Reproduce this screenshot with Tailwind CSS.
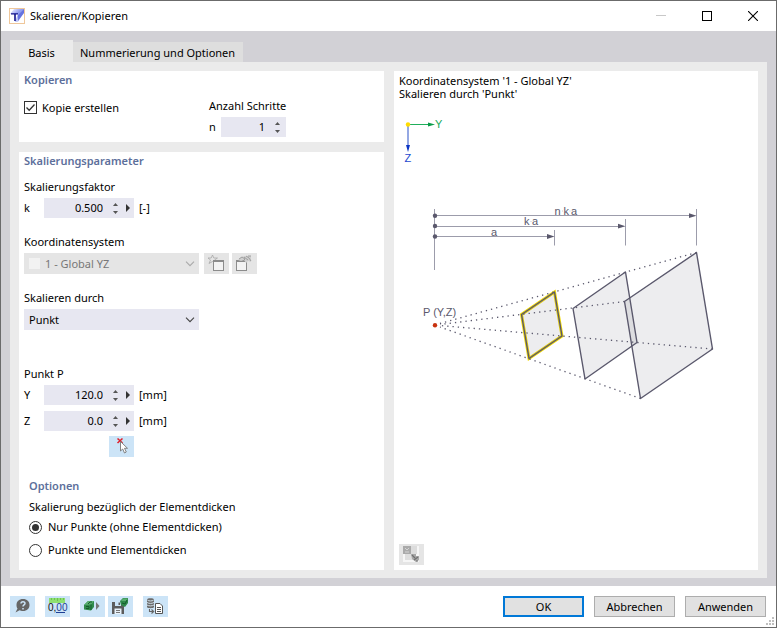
<!DOCTYPE html>
<html lang="de">
<head>
  <meta charset="UTF-8" />
  <meta name="viewport" content="width=device-width, initial-scale=1.0"/>
  <title>Skalieren/Kopieren</title>
  <script src="https://cdn.jsdelivr.net/npm/@tailwindcss/browser@4"></script>
</head>
<body class="bg-white text-black font-['Noto_Sans','Open_Sans',sans-serif] text-[11px] leading-4">
  <svg class="hidden">
    <symbol id="up" viewBox="0 0 5 3"><path d="M0 3L2.5 0L5 3Z" fill="#555"/></symbol>
    <symbol id="down" viewBox="0 0 5 3"><path d="M0 0L2.5 3L5 0Z" fill="#555"/></symbol>
    <symbol id="right" viewBox="0 0 4 8"><path d="M0 0L4 4L0 8Z" fill="#333"/></symbol>
    <symbol id="chevron" viewBox="0 0 10 6"><path d="M1 .7L5 4.7L9 .7" fill="none" stroke="currentColor" stroke-width="1.1"/></symbol>
  </svg>

  <div class="relative min-h-screen flex flex-col border border-[#6b6b6b]">
    <!-- Title bar -->
    <header class="h-[30px] flex items-center pl-2">
      <svg class="size-4" viewBox="0 0 16 16">
        <defs><linearGradient id="logo" x1="0" y1="0" x2="1" y2="1"><stop offset="0" stop-color="#fff"/><stop offset=".45" stop-color="#8d9af0"/><stop offset="1" stop-color="#fff"/></linearGradient></defs>
        <rect x=".5" y=".5" width="15" height="15" fill="#fff" stroke="#efc79a"/>
        <path d="M5 1H15V4L9 14H6L9 6H1Z" fill="url(#logo)"/>
        <path d="M10 6L15 1V5L9 13V7Z" fill="#6673e0"/>
        <path d="M2 5.2H9V6.6H6.8V13H5.2V6.6H2Z" fill="#12128c"/>
      </svg>
      <h1 class="ml-[5px] flex-1">Skalieren/Kopieren</h1>
      <button class="w-[46px] h-[30px] flex items-center justify-center" aria-label="Minimieren" disabled>
        <svg class="size-[10px]" viewBox="0 0 10 10"><path d="M0 4.5H10" stroke="#c8c8c8"/></svg>
      </button>
      <button class="w-[46px] h-[30px] flex items-center justify-center" aria-label="Maximieren">
        <svg class="size-[10px]" viewBox="0 0 10 10"><rect x=".5" y=".5" width="9" height="9" fill="none" stroke="#000"/></svg>
      </button>
      <button class="w-[46px] h-[30px] flex items-center justify-center" aria-label="Schließen">
        <svg class="size-[10px]" viewBox="0 0 10 10"><path d="M0 0L10 10M10 0L0 10" stroke="#000" stroke-width="1.1"/></svg>
      </button>
    </header>

    <main class="flex-1 flex flex-col bg-[#d2d1d6] px-[9px] pt-[9px] pb-2">
      <!-- Tabs -->
      <div class="flex items-end" role="tablist">
        <button role="tab" aria-selected="true" class="w-[63px] h-[22px] bg-[#ebebeb] pt-1">Basis</button>
        <button role="tab" aria-selected="false" class="h-5 bg-[#dedede] pl-[7px] pr-2 pt-[2px]">Nummerierung und Optionen</button>
      </div>

      <div class="flex-1 bg-[#ebebeb] px-[9px] pt-[9px] pb-2 grid grid-cols-[365px_minmax(0,1fr)] gap-[10px]">
        <div class="flex flex-col gap-[10px]">
          <!-- Kopieren -->
          <section class="bg-white px-[5px] pt-[1px] pb-[5px]">
            <h2 class="font-semibold text-[#5d6f9b]">Kopieren</h2>
            <div class="mt-[10px] grid grid-cols-[185px_1fr]">
              <label class="flex items-center gap-[5px] h-[19px]">
                <input type="checkbox" checked class="peer appearance-none size-[13px] border border-[#333] bg-white"/>
                <svg class="absolute size-[13px] invisible peer-checked:visible pointer-events-none" viewBox="0 0 13 13"><path d="M2.5 6.5L5.2 9.3L10.5 3.5" fill="none" stroke="#333" stroke-width="1.3"/></svg>
                Kopie erstellen
              </label>
              <div>
                <label for="n">Anzahl Schritte</label>
                <div class="mt-[3px] flex items-center">
                  <label for="n" class="w-3">n</label>
                  <div class="w-[65px] h-5 bg-[#e7e7f1] flex items-center">
                    <input id="n" value="1" class="w-11 text-right outline-none"/>
                    <span class="ml-[10px] flex flex-col gap-[5px]">
                      <button aria-label="Mehr"><svg class="w-[5px] h-[3px]"><use href="#up"/></svg></button>
                      <button aria-label="Weniger"><svg class="w-[5px] h-[3px]"><use href="#down"/></svg></button>
                    </span>
                  </div>
                </div>
              </div>
            </div>
          </section>

          <!-- Skalierungsparameter -->
          <section class="flex-1 bg-white px-[5px] pt-[1px] pb-[10px]">
            <h2 class="font-semibold text-[#5d6f9b]">Skalierungsparameter</h2>
            <label for="k" class="block mt-[10px]">Skalierungsfaktor</label>
            <div class="mt-[3px] flex items-center">
              <label for="k" class="w-5">k</label>
              <div class="w-[90px] h-5 bg-[#e7e7f1] flex items-center">
                <input id="k" value="0.500" class="w-[59px] text-right outline-none"/>
                <span class="ml-[10px] flex flex-col gap-[5px]">
                  <button aria-label="Mehr"><svg class="w-[5px] h-[3px]"><use href="#up"/></svg></button>
                  <button aria-label="Weniger"><svg class="w-[5px] h-[3px]"><use href="#down"/></svg></button>
                </span>
                <button class="ml-2" aria-label="Auswahl"><svg class="w-1 h-2"><use href="#right"/></svg></button>
              </div>
              <span class="ml-[5px]">[-]</span>
            </div>

            <label for="system" class="block mt-4">Koordinatensystem</label>
            <div class="mt-[3px] flex">
              <div class="relative w-[175px] h-[21px]">
                <select id="system" disabled class="appearance-none size-full bg-[#e5e5e5] pl-[21px] text-[#777] opacity-100">
                  <option>1 - Global YZ</option>
                </select>
                <span class="absolute left-[5px] top-[5px] size-[11px] bg-[#f2f2f2]"></span>
                <svg class="absolute right-[4px] top-2 w-[10px] h-[6px] text-[#aaa] pointer-events-none"><use href="#chevron"/></svg>
              </div>
              <button class="ml-[5px] w-[25px] h-[21px] bg-[#e5e5e5]" aria-label="Neues Koordinatensystem" disabled>
                <svg class="w-[25px] h-[21px]" viewBox="0 0 25 21" fill="none">
                  <path d="M8.5 2L9.8 5H13.500L10.500 7L12 10.500L8.500 8.500L5 10.500L6.500 7L4 5H7.200Z" stroke="#a8a8a8" stroke-width=".8"/>
                  <rect x="9.500" y="7.500" width="10" height="10" fill="#f3f3f3" stroke="#8c8c8c"/>
                  <path d="M9 8H20" stroke="#8c8c8c" stroke-width="2"/>
                </svg>
              </button>
              <button class="ml-[3px] w-[25px] h-[21px] bg-[#e5e5e5]" aria-label="Koordinatensystem bearbeiten" disabled>
                <svg class="w-[25px] h-[21px]" viewBox="0 0 25 21" fill="none">
                  <rect x="4.500" y="7.500" width="10" height="10" fill="#f3f3f3" stroke="#8c8c8c"/>
                  <path d="M4 8H15" stroke="#8c8c8c" stroke-width="2"/>
                  <path d="M6 7L9 4L14 3L19 3V9L16 8L14 10L12 7L9 8Z" fill="#cfcfcf"/>
                  <path d="M7 6L10 4L13 6L11 8M14 3L17 5L19 8M12 4L16 7M16 3H19" stroke="#999" stroke-width=".9"/>
                </svg>
              </button>
            </div>

            <label for="mode" class="block mt-4">Skalieren durch</label>
            <div class="mt-[3px] relative w-[175px] h-[21px]">
              <select id="mode" class="appearance-none size-full bg-[#e7e7f1] pl-[5px]">
                <option>Punkt</option>
              </select>
              <svg class="absolute right-[4px] top-2 w-[10px] h-[6px] text-[#444] pointer-events-none"><use href="#chevron"/></svg>
            </div>

            <h3 class="mt-9">Punkt P</h3>
            <div class="mt-[3px] flex items-center">
              <label for="y" class="w-5">Y</label>
              <div class="w-[90px] h-5 bg-[#e7e7f1] flex items-center">
                <input id="y" value="120.0" class="w-[59px] text-right outline-none"/>
                <span class="ml-[10px] flex flex-col gap-[5px]">
                  <button aria-label="Mehr"><svg class="w-[5px] h-[3px]"><use href="#up"/></svg></button>
                  <button aria-label="Weniger"><svg class="w-[5px] h-[3px]"><use href="#down"/></svg></button>
                </span>
                <button class="ml-2" aria-label="Auswahl"><svg class="w-1 h-2"><use href="#right"/></svg></button>
              </div>
              <span class="ml-[5px]">[mm]</span>
            </div>
            <div class="mt-[6px] flex items-center">
              <label for="z" class="w-5">Z</label>
              <div class="w-[90px] h-5 bg-[#e7e7f1] flex items-center">
                <input id="z" value="0.0" class="w-[59px] text-right outline-none"/>
                <span class="ml-[10px] flex flex-col gap-[5px]">
                  <button aria-label="Mehr"><svg class="w-[5px] h-[3px]"><use href="#up"/></svg></button>
                  <button aria-label="Weniger"><svg class="w-[5px] h-[3px]"><use href="#down"/></svg></button>
                </span>
                <button class="ml-2" aria-label="Auswahl"><svg class="w-1 h-2"><use href="#right"/></svg></button>
              </div>
              <span class="ml-[5px]">[mm]</span>
            </div>
            <button class="mt-[5px] ml-[85px] w-[25px] h-[21px] bg-[#cce4f7] block" aria-label="Punkt wählen">
              <svg class="w-[25px] h-[21px]" viewBox="0 0 25 21">
                <path d="M8.500 2.500L13.500 7M13.500 2.500L8.500 7" stroke="#e0202c" stroke-width="1.600"/>
                <path d="M11.500 5.500V15L13.700 13L15.500 17L17.300 16L15.500 12.300H18.500Z" fill="#fff" stroke="#777" stroke-width=".9"/>
              </svg>
            </button>

            <fieldset class="mt-[21px] ml-[5px]">
              <legend class="font-semibold text-[#5d6f9b]">Optionen</legend>
              <p class="mt-[5px]">Skalierung bezüglich der Elementdicken</p>
              <label class="mt-1 flex items-center gap-[6px]">
                <input type="radio" name="scope" checked class="appearance-none size-[13px] rounded-full border border-[#333] bg-white checked:bg-[#333] checked:bg-clip-content p-[2px]"/>
                Nur Punkte (ohne Elementdicken)
              </label>
              <label class="mt-[7px] flex items-center gap-[6px]">
                <input type="radio" name="scope" class="appearance-none size-[13px] rounded-full border border-[#333] bg-white checked:bg-[#333] checked:bg-clip-content p-[2px]"/>
                Punkte und Elementdicken
              </label>
            </fieldset>
          </section>
        </div>

        <!-- Preview -->
        <section class="bg-white pt-[3px] pb-[5px] flex flex-col">
          <p class="px-[5px] leading-[13px]">Koordinatensystem '1 - Global YZ'<br/>Skalieren durch 'Punkt'</p>
          <svg class="w-full flex-1" viewBox="394 100 364 443" preserveAspectRatio="xMinYMin meet" font-family="Liberation Sans, sans-serif" font-size="11" fill="none">
            <!-- axes -->
            <path d="M408 124.500H430" stroke="#1fae5c"/>
            <path d="M428 122.500L435 124.500L428 126.500Z" fill="#0a9c48"/>
            <path d="M408 125V147" stroke="#8299de" stroke-width="1.700"/>
            <path d="M406 145H410L408 152Z" fill="#0c35c4"/>
            <circle cx="408" cy="124.500" r="2.200" fill="#ffdc00"/>
            <text x="435" y="128" fill="#18a957">Y</text>
            <text x="404.500" y="162" fill="#1c49cf">Z</text>

            <!-- dimensions -->
            <path d="M434.500 209V270M696.500 209V245.500M625.500 219V245.500M554.500 230V245.500M435 215.500H690M435 226.500H619M435 236.500H548" stroke="#9c9cab"/>
            <g fill="#5a586c">
              <circle cx="435" cy="215.700" r="2.200"/>
              <circle cx="435" cy="226" r="2.200"/>
              <circle cx="435" cy="236.500" r="2.200"/>
              <path d="M689 213.300L696.500 215.700L689 218.100ZM618 223.800L625.500 226.200L618 228.600ZM547 234.100L554.500 236.500L547 238.900Z"/>
              <text x="554.500" y="214.500">n</text><text x="563.500" y="214.500">k</text><text x="571" y="214.500">a</text>
              <text x="524" y="225">k</text><text x="532" y="225">a</text>
              <text x="491" y="236">a</text>
              <text x="423" y="316">P (Y,Z)</text>
            </g>
            <path d="M562 211H563M569.500 211H570.500M530.500 221.500H531.500" stroke="#c9c9d2"/>

            <!-- scaled copies -->
            <path d="M554.500 292L521.500 314.500L529 358.500L562 336Z" stroke="#f0d800" stroke-width="3"/>
            <g fill="#5a586c" fill-opacity=".11" stroke="#5a586c" stroke-width="1.400" stroke-linejoin="round">
              <path d="M554.500 292L521.500 314.500L529 358.500L562 336Z"/>
              <path d="M625.500 272L573 308.500L585 379L637 342.500Z"/>
              <path d="M696.500 252.500L624.500 301.500L640.500 398.500L712.500 349Z"/>
            </g>
            <path d="M696.500 252.500L440 323.500M624.500 301.500L440 324.500M712.500 349L440 325.500M640.500 398.500L440 327" stroke="#5a586c" stroke-width="1.300" stroke-dasharray="1.300 4"/>
            <circle cx="435" cy="325.300" r="2.200" fill="#c8320f"/>
          </svg>
          <button class="ml-[5px] w-[25px] h-[21px] bg-[#e5e5e5]" aria-label="Ansicht wechseln" disabled>
            <svg class="w-[25px] h-[21px]" viewBox="0 0 25 21">
              <rect x="4" y="2" width="16" height="16" fill="#f6f6f6"/>
              <rect x="12" y="2" width="6" height="8" fill="#dcdcdc"/>
              <rect x="6" y="10" width="8" height="6" fill="#dedede"/>
              <rect x="4" y="2" width="8" height="8" fill="#aaa"/>
              <path d="M6 4L8 6L10 4M6 8H10" fill="none" stroke="#d4d4d4"/>
              <path d="M12 10H17V12H20V16L17 18L13 15Z" fill="#a8a8a8"/>
              <path d="M13 11L16 14M15 16L19 13M17 17H19" fill="none" stroke="#707070" stroke-width="1.200"/>
            </svg>
          </button>
        </section>
      </div>
    </main>

    <!-- Footer -->
    <footer class="flex items-center pl-[9px] pr-[10px] py-[10px]">
      <button class="w-[25px] h-[21px] bg-[#cce4f7]" aria-label="Hilfe">
        <svg class="w-[25px] h-[21px]" viewBox="0 0 25 21">
          <path d="M13 3C17 3 19.500 5.500 19.500 9S17 15 13 15C11.500 15 10.500 14.700 9.500 14.300L5.500 16.500L7.500 12.500C6.700 11.500 6.500 10.300 6.500 9C6.500 5.500 9 3 13 3Z" fill="#666"/>
          <path d="M11 7.500C11 5.200 15 5.200 15 7.300C15 9 13 8.800 13 10.600M13 12V13.500" fill="none" stroke="#cce4f7" stroke-width="1.500"/>
        </svg>
      </button>
      <button class="ml-[10px] w-[25px] h-[21px] bg-[#cce4f7]" aria-label="Einheiten und Dezimalstellen">
        <svg class="w-[25px] h-[21px]" viewBox="0 0 25 21">
          <rect x="4" y="2" width="16" height="5" fill="#8ee070"/>
          <path d="M6.500 2V4M9.500 2V4M12.500 2V5M15.500 2V4M18.500 2V4" stroke="#6cc054"/>
          <text x="3" y="15" font-size="10" font-family="Liberation Sans, sans-serif" fill="#111">0,<tspan fill="#1c3f94">00</tspan></text>
          <path d="M11 16.500H20" stroke="#1c3f94"/>
        </svg>
      </button>
      <button class="ml-[10px] w-[25px] h-[21px] bg-[#cce4f7]" aria-label="Standard laden">
        <svg class="w-[25px] h-[21px]" viewBox="0 0 25 21">
          <path d="M4 9L8 5H14V11L11 14.500L4 13.500Z" fill="#2f8a4c"/>
          <path d="M8 5H14L11 8.500L4 9Z" fill="#59ad70"/>
          <path d="M6 10.500H9V12.500H6M11 8.500V14M8 8L10 6H12" fill="none" stroke="#155c2c"/>
          <path d="M16 6L19.500 10L16 14Z" fill="#777"/>
        </svg>
      </button>
      <button class="ml-[3px] w-[25px] h-[21px] bg-[#cce4f7]" aria-label="Als Standard speichern">
        <svg class="w-[25px] h-[21px]" viewBox="0 0 25 21">
          <path d="M4 6H14L16 8V18H4Z" fill="#5c5c5c"/>
          <path d="M7 6H13V10H7Z" fill="#cce4f7"/><path d="M10.500 6.500H12V9H10.500Z" fill="#5c5c5c"/>
          <path d="M6.500 12.500H13.500V18H6.500Z" fill="#e9f3fb"/><path d="M8 14.500H12M8 16.500H12" stroke="#777"/>
          <path d="M12 5L15 2H20V7L17 11L13 9Z" fill="#2f8a4c"/>
          <path d="M15 2.500H20L18 5H13Z" fill="#59ad70"/><path d="M14 7L17 8L19 4" fill="none" stroke="#155c2c"/>
        </svg>
      </button>
      <button class="ml-[10px] w-[25px] h-[21px] bg-[#cce4f7]" aria-label="Aus Datenbank übernehmen">
        <svg class="w-[25px] h-[21px]" viewBox="0 0 25 21" fill="none">
          <path d="M4 3.500C4 1.800 11 1.800 11 3.500V11C11 12.600 4 12.600 4 11Z" fill="#6c6c6c"/>
          <path d="M4.500 4.200C6 5.200 9 5.200 10.500 4.200M4 6.500C6 7.700 9 7.700 11 6.500M4 9C6 10.200 9 10.200 11 9" stroke="#dcecf8" stroke-width=".9"/>
          <path d="M6.500 13V15.500H10M8.500 13.500L10.700 15.500L8.500 17.500" stroke="#666" stroke-width="1.100"/>
          <path d="M12.500 7.500H17L19.500 10V17.500H12.500Z" fill="#fff" stroke="#555"/>
          <path d="M14 11.500H18M14 13.500H18M14 15.500H18" stroke="#555"/>
        </svg>
      </button>
      <div class="ml-auto flex gap-[10px]">
        <button class="w-[81px] h-[21px] bg-[#e1e1e1] border-2 border-[#0078d7]">OK</button>
        <button class="w-[81px] h-[21px] bg-[#e1e1e1] border border-[#adadad]">Abbrechen</button>
        <button class="w-[81px] h-[21px] bg-[#e1e1e1] border border-[#adadad]">Anwenden</button>
      </div>
    </footer>
    <svg class="absolute right-[2px] bottom-[2px] size-2" viewBox="0 0 8 8" fill="#bfbfbf"><path d="M6 0h2v2h-2zM3 3h2v2h-2zM6 3h2v2h-2zM0 6h2v2h-2zM3 6h2v2h-2zM6 6h2v2h-2z"/></svg>
  </div>
</body>
</html>
